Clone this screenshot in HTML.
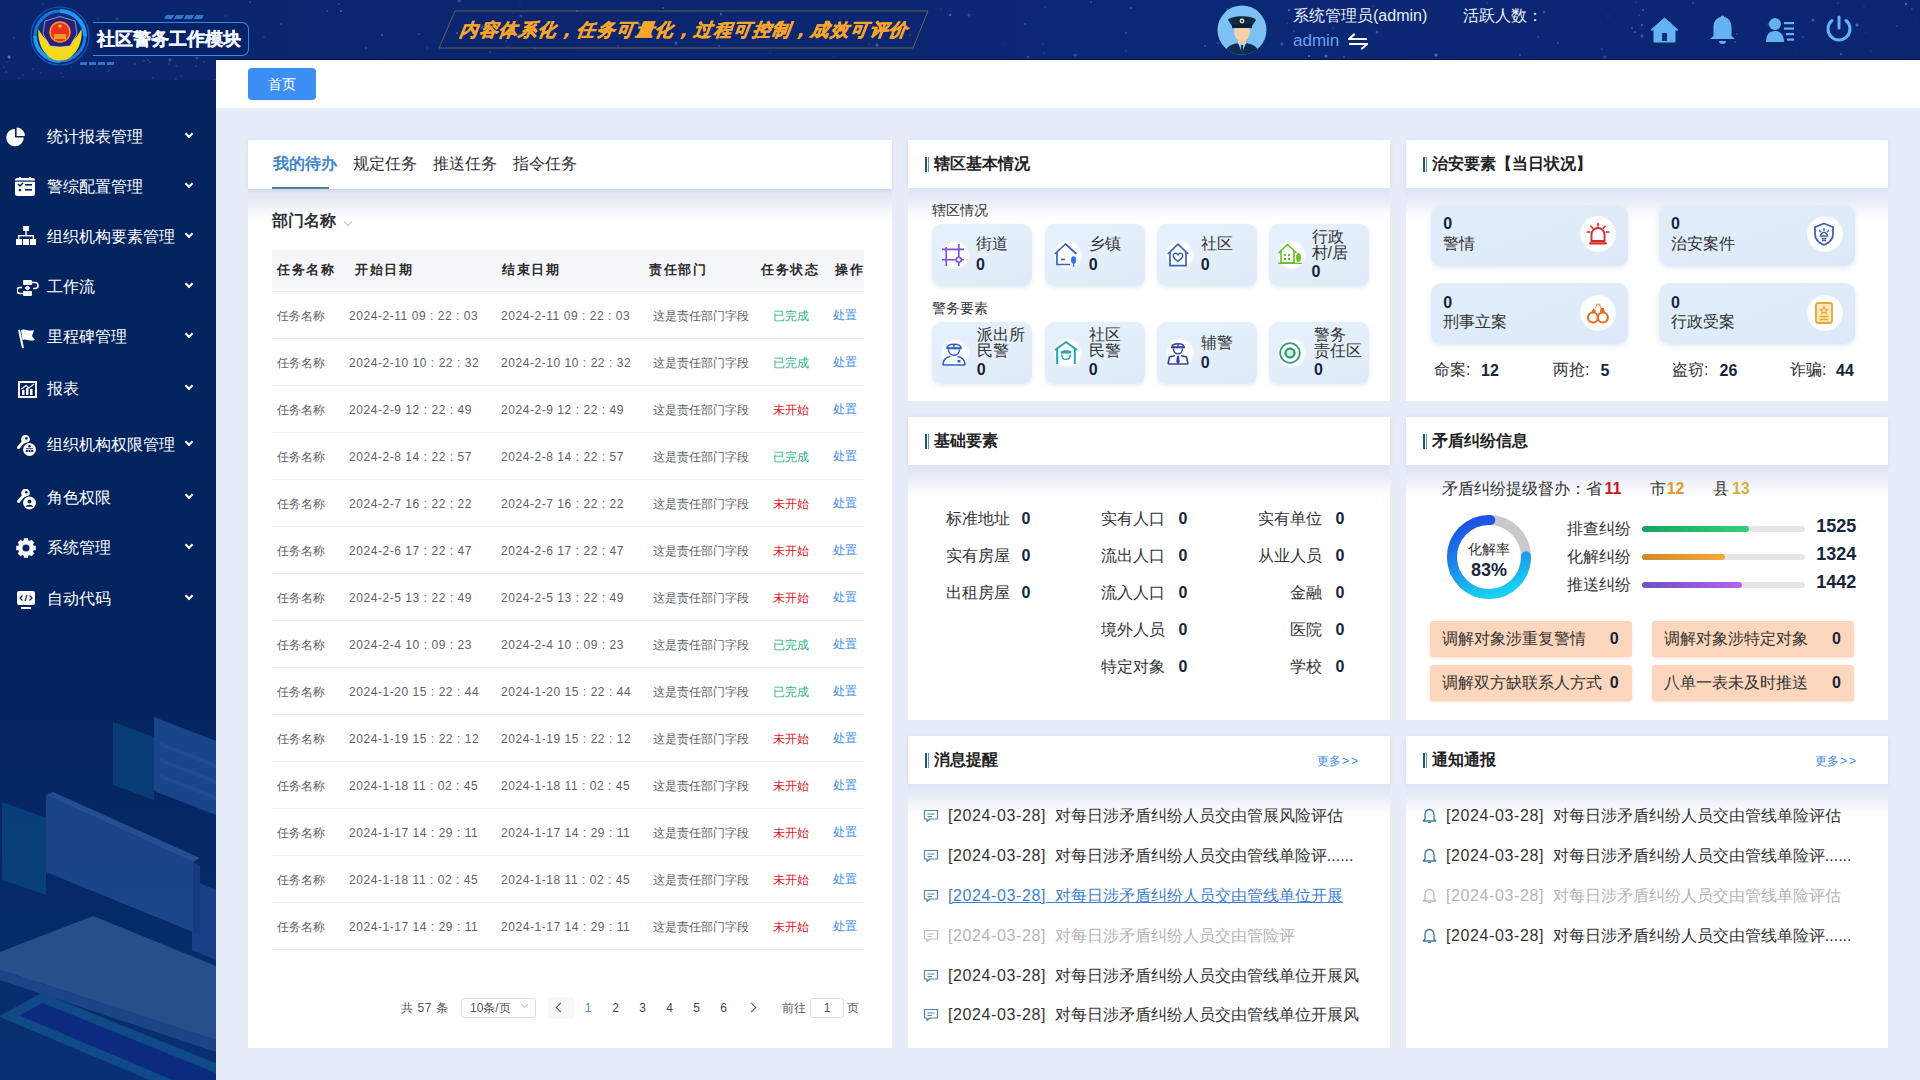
<!DOCTYPE html>
<html><head><meta charset="utf-8">
<style>
*{box-sizing:border-box;margin:0;padding:0}
html,body{width:1920px;height:1080px;overflow:hidden;font-family:"Liberation Sans",sans-serif;background:#e7edf8;position:relative}
.abs{position:absolute}
#hdr{left:0;top:0;width:1920px;height:60px;background:linear-gradient(90deg,#09256d 0%,#0a2670 30%,#0b2874 60%,#0a2671 100%);overflow:hidden}
#side{left:0;top:60px;width:216px;height:1020px;background:linear-gradient(180deg,#03245f 0px,#03245f 640px,#062a68 850px,#0a3074 1020px);overflow:hidden}
#sidetop{left:0;top:0;width:216px;height:20px;background:#09256d}
.mi{position:absolute;left:0;width:216px;height:30px;color:#fff;font-size:16px;line-height:32px}
.mi .t{position:absolute;left:47px;top:0}
.mi .ar{position:absolute;left:186px;top:10px;width:6px;height:6px;border-right:2px solid #fff;border-bottom:2px solid #fff;transform:rotate(45deg)}
.mi svg{position:absolute;left:14px;top:5px}
#crumb{left:216px;top:60px;width:1704px;height:48px;background:#fff}
#crumb .btn{position:absolute;left:32px;top:8px;width:68px;height:32px;background:#3b8ff5;border-radius:4px;color:#fff;font-size:14px;line-height:32px;text-align:center}
.panel{position:absolute;background:#fff}
.ph{position:absolute;left:0;top:0;width:100%;height:48px;background:#fff;box-shadow:0 1px 4px rgba(160,175,210,.3)}
.pb{position:absolute;left:0;top:48px;width:100%;bottom:0;background:linear-gradient(180deg,#dde4f2 0px,#e6ebf6 10px,#f3f5fb 20px,#fcfdfe 28px,#fff 34px)}
.ttl{position:absolute;left:26px;top:0;height:48px;line-height:48px;font-size:16px;font-weight:bold;color:#222}
.mark{position:absolute;left:16px;top:17px;width:6px;height:15px}
.mark:before{content:"";position:absolute;left:0.5px;top:0;width:2px;height:15px;background:#1f5a78}
.mark:after{content:"";position:absolute;left:3.5px;top:0;width:1.6px;height:15px;background:#5a9ac0}
.more{position:absolute;right:30px;top:1px;line-height:48px;font-size:12px;color:#3d8ee6}
.tab{position:absolute;top:13px;font-size:16px;line-height:22px;color:#303133}
.tab.act{color:#3f86cf;font-weight:bold}
.th{position:absolute;font-size:13px;line-height:18px;font-weight:bold;color:#2b2b2b;letter-spacing:1.5px}
.td{position:absolute;font-size:12px;line-height:18px;color:#606266;white-space:nowrap;margin-top:1px}
.dt{letter-spacing:.55px}
.pg{position:absolute;font-size:12px;line-height:18px;color:#555;white-space:nowrap}
/*PC*/
#pc{position:absolute;left:0;top:0;width:1920px;height:1080px}
#pc span{position:absolute;white-space:nowrap}
#pc .msg span{position:static}
.t14{font-size:14px;line-height:20px;color:#333}
.lb{font-size:16px;line-height:16px;color:#333}
.lb.r{text-align:right}
.num{font-size:16px;line-height:16px;font-weight:bold;color:#17263b}
.num18{font-size:18px;line-height:20px;font-weight:bold;color:#17263b}
.card{position:absolute;border-radius:9px;background:linear-gradient(160deg,#e5f1fb 0%,#e3eefa 60%,#dfe9f8 100%);box-shadow:0 2px 4px rgba(195,210,232,.4)}
.card2{position:absolute;width:196.5px;height:61px;border-radius:10px;background:linear-gradient(160deg,#e1eefa 0%,#dde9f8 100%);box-shadow:0 2px 5px rgba(190,205,230,.45)}
.icbg{position:absolute;width:30px;height:30px;border-radius:50%;background:radial-gradient(circle,#fff 55%,rgba(255,255,255,0) 72%)}
.icbg2{position:absolute;width:36px;height:36px;margin:-1px 0 0 -1px;border-radius:50%;background:radial-gradient(circle,#fff 60%,rgba(255,255,255,.6) 78%,rgba(255,255,255,0) 100%)}
.msg{font-size:16px;line-height:22px;color:#333}
.msg .dte{letter-spacing:.6px}
.msg .zh{letter-spacing:0;margin-left:0}
.msg.link{color:#3f7fcf;text-decoration:underline}
.msg.gray{color:#b5b5b5}
/*/PC*/
</style></head><body>
<div id="side" class="abs" style="z-index:0"><div id="sidetop" class="abs"></div>
<svg class="abs" style="left:0;top:560px;opacity:.85" width="216" height="460" viewBox="0 620 216 460">
 <polygon points="113,722 154,737 154,800 113,785" fill="#0b4a84" opacity=".75"/>
 <polygon points="154,717 216,741 216,815 154,791" fill="#1d4b93"/>
 <polygon points="160,742 216,764 216,768 160,746" fill="#2a5aa0" opacity=".6"/>
 <polygon points="160,758 216,780 216,784 160,762" fill="#2a5aa0" opacity=".6"/>
 <polygon points="160,774 216,796 216,800 160,778" fill="#2a5aa0" opacity=".6"/>
 <polygon points="2,802 46,818 46,895 2,880" fill="#0b4a84" opacity=".8"/>
 <polygon points="192,880 216,890 216,960 192,950" fill="#1c4690"/>
 <polygon points="46,795 193,862 193,932 46,872" fill="#1f4b8f"/>
 <polygon points="193,862 200,866 200,936 193,932" fill="#173f85"/>
 <polygon points="46,795 53,792 200,858 193,862" fill="#2b5598"/>
 <polygon points="0,958 93,917 216,968 216,1030 0,945" fill="#2c5591" opacity="0"/>
 <polygon points="0,952 93,916 216,966 216,1040 0,970" fill="#2d5690"/>
 <polygon points="0,970 216,1040 216,1052 0,980" fill="#204a8c"/>
 <polygon points="0,1020 38,1002 216,1072 216,1085 0,1003" fill="none"/>
 <polygon points="9,1016 42,998 320,1110 280,1130" fill="#0b2b82" stroke="#124f8c" stroke-width="9" stroke-linejoin="miter"/>
</svg>
<svg class="abs" style="left:6px;top:67px" width="22" height="22" viewBox="0 0 22 22"><path d="M9 10.5 L9 1.7 A8.8 8.8 0 1 0 17.8 10.5 Z" fill="#fff"/><path d="M10.6 8.9 L10.6 0.6 A8.3 8.3 0 0 1 18.9 8.9 Z" fill="#fff"/></svg>
<div class="mi" style="top:61px"><span class="t">统计报表管理</span><span class="ar"></span></div>
<svg class="abs" style="left:15px;top:117px" width="22" height="22" viewBox="0 0 22 22"><rect x="0" y="1" width="20" height="18" rx="2" fill="#fff"/><rect x="4" y="0" width="2" height="3" fill="#fff"/><rect x="14" y="0" width="2" height="3" fill="#fff"/><path d="M3 7 l2 2 3-3" stroke="#03245f" stroke-width="1.5" fill="none"/><rect x="10" y="7" width="7" height="1.6" fill="#03245f"/><rect x="10" y="12" width="7" height="1.6" fill="#03245f"/><circle cx="5" cy="13" r="1.3" fill="#03245f"/><rect x="0" y="3.5" width="20" height="1.2" fill="#03245f"/></svg>
<div class="mi" style="top:111px"><span class="t">警综配置管理</span><span class="ar"></span></div>
<svg class="abs" style="left:16px;top:166px" width="22" height="22" viewBox="0 0 22 22"><rect x="7" y="0" width="6" height="5" fill="#fff"/><rect x="9.3" y="5" width="1.4" height="5" fill="#fff"/><rect x="2" y="9" width="16" height="1.4" fill="#fff"/><rect x="2" y="9" width="1.4" height="4" fill="#fff"/><rect x="16.6" y="9" width="1.4" height="4" fill="#fff"/><rect x="0" y="13" width="6" height="6" fill="#fff"/><rect x="7" y="13" width="6" height="6" fill="#fff"/><rect x="14" y="13" width="6" height="6" fill="#fff"/></svg>
<div class="mi" style="top:161px"><span class="t">组织机构要素管理</span><span class="ar"></span></div>
<svg class="abs" style="left:17px;top:220px" width="22" height="22" viewBox="0 0 22 22"><rect x="6" y="0" width="9" height="5" rx="1" fill="#fff"/><rect x="6" y="11" width="9" height="5" rx="1" fill="#fff"/><path d="M15 2.5 h3 a3 3 0 0 1 0 6 h-2" stroke="#fff" stroke-width="1.6" fill="none"/><path d="M6 13.5 h-3 a3 3 0 0 1 0 -6 h2" stroke="#fff" stroke-width="1.6" fill="none"/><path d="M10.5 5.5 l3 2.5 -3 2.5 -3 -2.5z" fill="#fff"/></svg>
<div class="mi" style="top:211px"><span class="t">工作流</span><span class="ar"></span></div>
<svg class="abs" style="left:18px;top:268px" width="22" height="22" viewBox="0 0 22 22"><path d="M1 2 L5 20" stroke="#fff" stroke-width="2" /><path d="M3 2 C7 0 10 4 16 2 L14 8 L17 12 C11 14 8 10 4.5 12Z" fill="#fff"/></svg>
<div class="mi" style="top:261px"><span class="t">里程碑管理</span><span class="ar"></span></div>
<svg class="abs" style="left:18px;top:321px" width="22" height="22" viewBox="0 0 22 22"><rect x="1" y="1" width="17" height="15" fill="none" stroke="#fff" stroke-width="2"/><rect x="4" y="9" width="2.5" height="5" fill="#fff"/><rect x="8" y="7" width="2.5" height="7" fill="#fff"/><rect x="12" y="8" width="2.5" height="6" fill="#fff"/><path d="M3.5 8 L8 4.5 L11 7 L16 3" stroke="#fff" stroke-width="1.3" fill="none"/></svg>
<div class="mi" style="top:313px"><span class="t">报表</span><span class="ar"></span></div>
<svg class="abs" style="left:17px;top:375px" width="22" height="22" viewBox="0 0 22 22"><path d="M7 6 L1.5 12.5" stroke="#fff" stroke-width="3" stroke-linecap="round"/><circle cx="8.5" cy="4.2" r="4.3" fill="#fff"/><circle cx="9.3" cy="3.4" r="1.3" fill="#03245f"/><circle cx="12.5" cy="14.5" r="7.6" fill="#03245f"/><circle cx="12.5" cy="14.5" r="6.4" fill="#fff"/><circle cx="12.5" cy="11.3" r="1.3" fill="#03245f"/><rect x="9" y="13.3" width="7" height="0.9" fill="#03245f"/><rect x="8.8" y="15" width="2" height="2" fill="#03245f"/><rect x="11.5" y="15" width="2" height="2" fill="#03245f"/><rect x="14.2" y="15" width="2" height="2" fill="#03245f"/></svg>
<div class="mi" style="top:369px"><span class="t">组织机构权限管理</span><span class="ar"></span></div>
<svg class="abs" style="left:17px;top:429px" width="22" height="22" viewBox="0 0 22 22"><path d="M7 6 L1.5 12.5" stroke="#fff" stroke-width="3" stroke-linecap="round"/><circle cx="8.5" cy="4" r="4.3" fill="#fff"/><circle cx="9.3" cy="3.2" r="1.3" fill="#03245f"/><circle cx="12.5" cy="14" r="7.6" fill="#03245f"/><circle cx="12.5" cy="14" r="6.4" fill="#fff"/><circle cx="12.5" cy="12.5" r="2" fill="#0c2a30"/><path d="M8.8 17.8 C9 15 16 15 16.2 17.8Z" fill="#0c2a30"/></svg>
<div class="mi" style="top:422px"><span class="t">角色权限</span><span class="ar"></span></div>
<svg class="abs" style="left:16px;top:478px" width="22" height="22" viewBox="0 0 22 22"><path d="M17.31 7.94 L19.76 7.82 L19.76 12.18 L17.31 12.06 L16.63 13.71 L18.44 15.36 L15.36 18.44 L13.71 16.63 L12.06 17.31 L12.18 19.76 L7.82 19.76 L7.94 17.31 L6.29 16.63 L4.64 18.44 L1.56 15.36 L3.37 13.71 L2.69 12.06 L0.24 12.18 L0.24 7.82 L2.69 7.94 L3.37 6.29 L1.56 4.64 L4.64 1.56 L6.29 3.37 L7.94 2.69 L7.82 0.24 L12.18 0.24 L12.06 2.69 L13.71 3.37 L15.36 1.56 L18.44 4.64 L16.63 6.29Z" fill="#fff"/><circle cx="10" cy="10" r="8" fill="#fff"/><circle cx="10" cy="10" r="3.5" fill="#03245f"/></svg>
<div class="mi" style="top:472px"><span class="t">系统管理</span><span class="ar"></span></div>
<svg class="abs" style="left:17px;top:531px" width="22" height="22" viewBox="0 0 22 22"><rect x="0" y="0" width="18" height="14" rx="2" fill="#fff"/><rect x="4" y="16" width="10" height="2" fill="#fff"/><path d="M5.5 4.5 L3 7 L5.5 9.5 M12.5 4.5 L15 7 L12.5 9.5 M10 4 L8 10" stroke="#1b2f55" stroke-width="1.3" fill="none"/></svg>
<div class="mi" style="top:523px"><span class="t">自动代码</span><span class="ar"></span></div>
</div>
<div id="hdr" class="abs"></div>
<svg class="abs" style="left:0;top:0" width="1920" height="80" viewBox="0 0 1920 80"><circle cx="457" cy="33" r="1" fill="#8fb8ff" opacity="0.52"/><circle cx="910" cy="35" r="1.5" fill="#8fb8ff" opacity="0.16"/><circle cx="1608" cy="16" r="0.8" fill="#8fb8ff" opacity="0.23"/><circle cx="1377" cy="32" r="1.5" fill="#8fb8ff" opacity="0.34"/><circle cx="1227" cy="9" r="0.8" fill="#8fb8ff" opacity="0.50"/><circle cx="1005" cy="44" r="0.6" fill="#8fb8ff" opacity="0.21"/><circle cx="1838" cy="3" r="0.6" fill="#8fb8ff" opacity="0.48"/><circle cx="517" cy="36" r="1.2" fill="#8fb8ff" opacity="0.44"/><circle cx="1769" cy="24" r="1.5" fill="#8fb8ff" opacity="0.33"/><circle cx="1796" cy="53" r="0.6" fill="#8fb8ff" opacity="0.16"/><circle cx="950" cy="15" r="1.2" fill="#8fb8ff" opacity="0.46"/><circle cx="1642" cy="25" r="1.2" fill="#8fb8ff" opacity="0.38"/><circle cx="1025" cy="24" r="0.8" fill="#8fb8ff" opacity="0.51"/><circle cx="1309" cy="56" r="1" fill="#8fb8ff" opacity="0.55"/><circle cx="1289" cy="10" r="1" fill="#8fb8ff" opacity="0.54"/><circle cx="1737" cy="34" r="0.8" fill="#8fb8ff" opacity="0.40"/><circle cx="1897" cy="16" r="0.6" fill="#8fb8ff" opacity="0.18"/><circle cx="1640" cy="59" r="0.6" fill="#8fb8ff" opacity="0.29"/><circle cx="39" cy="26" r="1.2" fill="#8fb8ff" opacity="0.50"/><circle cx="85" cy="37" r="0.6" fill="#8fb8ff" opacity="0.30"/><circle cx="1126" cy="33" r="1" fill="#8fb8ff" opacity="0.35"/><circle cx="1917" cy="19" r="0.6" fill="#8fb8ff" opacity="0.19"/><circle cx="1028" cy="57" r="1.2" fill="#8fb8ff" opacity="0.27"/><circle cx="506" cy="41" r="1" fill="#8fb8ff" opacity="0.28"/><circle cx="1841" cy="54" r="1.2" fill="#8fb8ff" opacity="0.30"/><circle cx="1670" cy="23" r="1.5" fill="#8fb8ff" opacity="0.42"/><circle cx="197" cy="58" r="1.5" fill="#8fb8ff" opacity="0.26"/><circle cx="1218" cy="43" r="1" fill="#8fb8ff" opacity="0.32"/><circle cx="496" cy="18" r="1" fill="#8fb8ff" opacity="0.15"/><circle cx="797" cy="35" r="0.6" fill="#8fb8ff" opacity="0.30"/><circle cx="1131" cy="8" r="1" fill="#8fb8ff" opacity="0.34"/><circle cx="1304" cy="21" r="1" fill="#8fb8ff" opacity="0.45"/><circle cx="43" cy="4" r="0.6" fill="#8fb8ff" opacity="0.54"/><circle cx="482" cy="27" r="1.5" fill="#8fb8ff" opacity="0.39"/><circle cx="341" cy="11" r="1" fill="#8fb8ff" opacity="0.49"/><circle cx="507" cy="47" r="0.6" fill="#8fb8ff" opacity="0.46"/><circle cx="52" cy="34" r="0.8" fill="#8fb8ff" opacity="0.27"/><circle cx="427" cy="48" r="0.8" fill="#8fb8ff" opacity="0.28"/><circle cx="1302" cy="39" r="0.6" fill="#8fb8ff" opacity="0.19"/><circle cx="618" cy="20" r="0.8" fill="#8fb8ff" opacity="0.33"/><circle cx="1643" cy="10" r="1" fill="#8fb8ff" opacity="0.45"/><circle cx="419" cy="34" r="1" fill="#8fb8ff" opacity="0.24"/><circle cx="366" cy="48" r="1.5" fill="#8fb8ff" opacity="0.22"/><circle cx="535" cy="48" r="0.6" fill="#8fb8ff" opacity="0.47"/><circle cx="663" cy="8" r="1" fill="#8fb8ff" opacity="0.36"/><circle cx="1632" cy="28" r="1.2" fill="#8fb8ff" opacity="0.27"/><circle cx="1091" cy="2" r="1.2" fill="#8fb8ff" opacity="0.21"/><circle cx="9" cy="57" r="1.5" fill="#8fb8ff" opacity="0.54"/><circle cx="834" cy="57" r="0.8" fill="#8fb8ff" opacity="0.16"/><circle cx="877" cy="45" r="1.5" fill="#8fb8ff" opacity="0.54"/><circle cx="1044" cy="53" r="0.6" fill="#8fb8ff" opacity="0.49"/><circle cx="1864" cy="7" r="0.8" fill="#8fb8ff" opacity="0.17"/><circle cx="1735" cy="42" r="0.8" fill="#8fb8ff" opacity="0.51"/><circle cx="1727" cy="35" r="0.6" fill="#8fb8ff" opacity="0.34"/><circle cx="459" cy="1" r="1.5" fill="#8fb8ff" opacity="0.32"/><circle cx="1803" cy="37" r="1" fill="#8fb8ff" opacity="0.20"/><circle cx="1866" cy="32" r="0.6" fill="#8fb8ff" opacity="0.29"/><circle cx="379" cy="32" r="0.6" fill="#8fb8ff" opacity="0.22"/><circle cx="1520" cy="55" r="0.8" fill="#8fb8ff" opacity="0.48"/><circle cx="14" cy="38" r="1.2" fill="#8fb8ff" opacity="0.17"/><circle cx="521" cy="16" r="1.5" fill="#8fb8ff" opacity="0.36"/><circle cx="98" cy="19" r="0.6" fill="#8fb8ff" opacity="0.49"/><circle cx="1488" cy="3" r="0.6" fill="#8fb8ff" opacity="0.18"/><circle cx="1871" cy="51" r="0.6" fill="#8fb8ff" opacity="0.36"/><circle cx="941" cy="9" r="0.6" fill="#8fb8ff" opacity="0.29"/><circle cx="1242" cy="35" r="1" fill="#8fb8ff" opacity="0.26"/><circle cx="1897" cy="26" r="0.8" fill="#8fb8ff" opacity="0.37"/><circle cx="1375" cy="23" r="0.6" fill="#8fb8ff" opacity="0.38"/><circle cx="82" cy="28" r="1.5" fill="#8fb8ff" opacity="0.30"/><circle cx="1538" cy="37" r="1.2" fill="#8fb8ff" opacity="0.17"/><circle cx="1205" cy="46" r="1" fill="#8fb8ff" opacity="0.32"/><circle cx="1333" cy="28" r="0.8" fill="#8fb8ff" opacity="0.24"/><circle cx="519" cy="35" r="1.2" fill="#8fb8ff" opacity="0.24"/><circle cx="250" cy="2" r="1" fill="#8fb8ff" opacity="0.30"/><circle cx="1724" cy="47" r="1" fill="#8fb8ff" opacity="0.20"/><circle cx="1326" cy="56" r="1.5" fill="#8fb8ff" opacity="0.47"/><circle cx="1282" cy="44" r="1.5" fill="#8fb8ff" opacity="0.36"/><circle cx="1558" cy="43" r="1.2" fill="#8fb8ff" opacity="0.21"/><circle cx="1487" cy="3" r="0.6" fill="#8fb8ff" opacity="0.38"/><circle cx="1266" cy="23" r="0.6" fill="#8fb8ff" opacity="0.29"/><circle cx="1636" cy="2" r="0.6" fill="#8fb8ff" opacity="0.42"/><circle cx="1605" cy="57" r="1.5" fill="#8fb8ff" opacity="0.27"/><circle cx="170" cy="60" r="1.5" fill="#8fb8ff" opacity="0.35"/><circle cx="1373" cy="6" r="0.6" fill="#8fb8ff" opacity="0.52"/><circle cx="117" cy="19" r="1.5" fill="#8fb8ff" opacity="0.22"/><circle cx="148" cy="60" r="0.8" fill="#8fb8ff" opacity="0.33"/><circle cx="1344" cy="57" r="1" fill="#8fb8ff" opacity="0.30"/><circle cx="762" cy="21" r="1.2" fill="#8fb8ff" opacity="0.54"/><circle cx="721" cy="14" r="1.2" fill="#8fb8ff" opacity="0.49"/><circle cx="1857" cy="25" r="1.5" fill="#8fb8ff" opacity="0.45"/><circle cx="1294" cy="31" r="1.2" fill="#8fb8ff" opacity="0.21"/><circle cx="770" cy="53" r="0.8" fill="#8fb8ff" opacity="0.19"/><circle cx="1436" cy="55" r="1.5" fill="#8fb8ff" opacity="0.53"/><circle cx="1126" cy="51" r="0.8" fill="#8fb8ff" opacity="0.26"/><circle cx="382" cy="35" r="1" fill="#8fb8ff" opacity="0.52"/><circle cx="1635" cy="32" r="1" fill="#8fb8ff" opacity="0.42"/><circle cx="1642" cy="36" r="1.5" fill="#8fb8ff" opacity="0.38"/><circle cx="513" cy="13" r="0.6" fill="#8fb8ff" opacity="0.26"/><circle cx="1544" cy="12" r="1.5" fill="#8fb8ff" opacity="0.29"/><circle cx="618" cy="46" r="0.8" fill="#8fb8ff" opacity="0.32"/><circle cx="1339" cy="42" r="0.8" fill="#8fb8ff" opacity="0.34"/><circle cx="1602" cy="49" r="1.5" fill="#8fb8ff" opacity="0.16"/><circle cx="1906" cy="4" r="1.2" fill="#8fb8ff" opacity="0.46"/><circle cx="1693" cy="3" r="0.8" fill="#8fb8ff" opacity="0.51"/><circle cx="1245" cy="47" r="0.6" fill="#8fb8ff" opacity="0.53"/><circle cx="1639" cy="15" r="0.8" fill="#8fb8ff" opacity="0.46"/><circle cx="264" cy="37" r="0.6" fill="#8fb8ff" opacity="0.51"/><circle cx="490" cy="52" r="1" fill="#8fb8ff" opacity="0.22"/><circle cx="226" cy="16" r="1" fill="#8fb8ff" opacity="0.16"/><circle cx="869" cy="44" r="1" fill="#8fb8ff" opacity="0.15"/><circle cx="643" cy="26" r="1.2" fill="#8fb8ff" opacity="0.18"/><circle cx="1237" cy="45" r="1.2" fill="#8fb8ff" opacity="0.31"/><circle cx="1045" cy="7" r="1" fill="#8fb8ff" opacity="0.18"/><circle cx="831" cy="26" r="1.5" fill="#8fb8ff" opacity="0.51"/><circle cx="719" cy="46" r="1.2" fill="#8fb8ff" opacity="0.27"/><circle cx="1298" cy="39" r="1" fill="#8fb8ff" opacity="0.19"/><circle cx="1813" cy="20" r="1.5" fill="#8fb8ff" opacity="0.36"/><circle cx="676" cy="43" r="1.5" fill="#8fb8ff" opacity="0.45"/><circle cx="1240" cy="44" r="0.8" fill="#8fb8ff" opacity="0.22"/><circle cx="1709" cy="39" r="0.6" fill="#8fb8ff" opacity="0.19"/><circle cx="1075" cy="55" r="1.5" fill="#8fb8ff" opacity="0.32"/><circle cx="577" cy="11" r="1.2" fill="#8fb8ff" opacity="0.27"/><circle cx="339" cy="4" r="0.8" fill="#8fb8ff" opacity="0.45"/><circle cx="1043" cy="44" r="1" fill="#8fb8ff" opacity="0.19"/><circle cx="520" cy="3" r="0.8" fill="#8fb8ff" opacity="0.17"/><circle cx="969" cy="15" r="1.5" fill="#8fb8ff" opacity="0.29"/><circle cx="639" cy="24" r="1.5" fill="#8fb8ff" opacity="0.47"/><circle cx="1912" cy="9" r="1.5" fill="#8fb8ff" opacity="0.19"/><circle cx="1396" cy="11" r="0.8" fill="#8fb8ff" opacity="0.38"/><circle cx="1287" cy="23" r="0.8" fill="#8fb8ff" opacity="0.39"/><circle cx="281" cy="24" r="0.8" fill="#8fb8ff" opacity="0.37"/><circle cx="327" cy="11" r="1" fill="#8fb8ff" opacity="0.30"/><circle cx="63" cy="77" r="0.8" fill="#8fb8ff" opacity="0.3"/><circle cx="96" cy="68" r="0.8" fill="#8fb8ff" opacity="0.3"/><circle cx="176" cy="66" r="0.8" fill="#8fb8ff" opacity="0.3"/><circle cx="196" cy="66" r="0.8" fill="#8fb8ff" opacity="0.3"/><circle cx="108" cy="71" r="0.8" fill="#8fb8ff" opacity="0.3"/><circle cx="153" cy="78" r="0.8" fill="#8fb8ff" opacity="0.3"/><circle cx="144" cy="61" r="0.8" fill="#8fb8ff" opacity="0.3"/><circle cx="41" cy="73" r="0.8" fill="#8fb8ff" opacity="0.3"/><circle cx="23" cy="75" r="0.8" fill="#8fb8ff" opacity="0.3"/><circle cx="50" cy="63" r="0.8" fill="#8fb8ff" opacity="0.3"/><circle cx="135" cy="64" r="0.8" fill="#8fb8ff" opacity="0.3"/><circle cx="169" cy="64" r="0.8" fill="#8fb8ff" opacity="0.3"/><circle cx="176" cy="79" r="0.8" fill="#8fb8ff" opacity="0.3"/><circle cx="204" cy="62" r="0.8" fill="#8fb8ff" opacity="0.3"/><circle cx="61" cy="73" r="0.8" fill="#8fb8ff" opacity="0.3"/><circle cx="33" cy="69" r="0.8" fill="#8fb8ff" opacity="0.3"/><circle cx="19" cy="78" r="0.8" fill="#8fb8ff" opacity="0.3"/><circle cx="6" cy="72" r="0.8" fill="#8fb8ff" opacity="0.3"/><circle cx="109" cy="70" r="0.8" fill="#8fb8ff" opacity="0.3"/><circle cx="4" cy="67" r="0.8" fill="#8fb8ff" opacity="0.3"/><circle cx="71" cy="67" r="0.8" fill="#8fb8ff" opacity="0.3"/><circle cx="150" cy="62" r="0.8" fill="#8fb8ff" opacity="0.3"/><circle cx="181" cy="76" r="0.8" fill="#8fb8ff" opacity="0.3"/><circle cx="7" cy="62" r="0.8" fill="#8fb8ff" opacity="0.3"/><circle cx="215" cy="80" r="0.8" fill="#8fb8ff" opacity="0.3"/></svg>
<!-- logo -->
<svg class="abs" style="left:28px;top:4px" width="64" height="64" viewBox="0 0 64 64">
 <circle cx="32" cy="32" r="29" fill="none" stroke="#1b6fd8" stroke-width="1.2" opacity=".7"/>
 <circle cx="32" cy="32" r="26" fill="#0d2f7a"/>
 <path d="M32 7 A25 25 0 0 1 57 32" stroke="#1e9af5" stroke-width="4" fill="none"/>
 <path d="M57 32 A25 25 0 0 1 32 57" stroke="#1a8ae8" stroke-width="3" fill="none" opacity=".9"/>
 <path d="M32 57 A25 25 0 0 1 7 32" stroke="#1e9af5" stroke-width="4" fill="none"/>
 <path d="M7 32 A25 25 0 0 1 32 7" stroke="#1577d6" stroke-width="3" fill="none"/>
 <path d="M10.5 25 C9 44 20 56 32 56 C44 56 55 44 53.5 25 C48 36 42 40 32 40 C22 40 16 36 10.5 25Z" fill="#f4d81c"/>
 <path d="M17 17 L32 12.5 L47 17 L49 30 L42 42 L32 43 L22 42 L15 30Z" fill="#2a1f7a" stroke="#cfd8ff" stroke-width=".6"/>
 <circle cx="32" cy="28" r="10" fill="#e8341c"/>
 <circle cx="32" cy="28" r="10" fill="none" stroke="#f59a2a" stroke-width="1.5"/>
 <rect x="26" y="30" width="12" height="5" fill="#f59a2a"/>
 <circle cx="32" cy="22" r="1.6" fill="#ffd84a"/>
 <path d="M18 46 C24 54 40 54 46 46 L44 52 C38 58 26 58 20 52Z" fill="#f4d81c"/>
</svg>
<div class="abs" style="left:93px;top:22px;width:156px;height:34px;border:1.5px solid #3a88e6;border-left:none;border-radius:0 7px 7px 0;background:rgba(6,28,88,.35)"></div>
<div class="abs" style="left:165px;top:15px;width:38px;height:4px;background:repeating-linear-gradient(90deg,#3d8fe8 0 8px,transparent 8px 10px);transform:skewX(-20deg);opacity:.75"></div>
<div class="abs" style="left:80px;top:62px;width:36px;height:3px;background:repeating-linear-gradient(90deg,#3d8fe8 0 7px,transparent 7px 9px);transform:skewX(-20deg);opacity:.75"></div>
<div class="abs" style="left:97px;top:26px;font-size:18px;line-height:26px;font-weight:bold;color:#f4f8ff;letter-spacing:0px;-webkit-text-stroke:.3px #f4f8ff">社区警务工作模块</div>
<!-- slogan -->
<svg class="abs" style="left:430px;top:8px" width="500" height="44" viewBox="0 0 500 44">
 <polygon points="25,3 498,3 483,40 9,40" fill="rgba(20,40,110,.35)" stroke="#b58a3a" stroke-width="1" opacity=".55"/>
</svg>
<div class="abs" style="left:460px;top:17px;font-size:18px;line-height:26px;font-weight:bold;font-style:italic;color:#f5a52c;transform:skewX(-8deg);letter-spacing:1.5px;-webkit-text-stroke:.5px #f5a52c">内容体系化，任务可量化，过程可控制，成效可评价</div>
<!-- avatar -->
<svg class="abs" style="left:1217px;top:5px" width="50" height="50" viewBox="0 0 50 50">
 <defs><clipPath id="avc"><circle cx="25" cy="25" r="24.5"/></clipPath></defs>
 <circle cx="25" cy="25" r="24.5" fill="#7cc0f4"/>
 <g clip-path="url(#avc)">
  <path d="M8 50 C8 42 14 38 25 38 C36 38 42 42 42 50Z" fill="#0f2a55"/>
  <path d="M21 38 L25 48 L29 38Z" fill="#9fd4f5"/>
  <path d="M24 40 L26 40 L26.5 48 L23.5 48Z" fill="#0e3a5a"/>
  <rect x="21" y="32" width="8" height="7" fill="#f3c9a0"/>
  <ellipse cx="25" cy="27" rx="8" ry="9" fill="#f6d0a8"/>
  <path d="M11 15 C14 10 36 10 39 15 L35 21 L15 21Z" fill="#0f2a45"/>
  <rect x="15" y="19" width="20" height="4" fill="#0b1f38"/>
  <circle cx="25" cy="16" r="2.4" fill="#e8e0b0"/><circle cx="25" cy="16" r="1.1" fill="#0f2a45"/>
 </g>
</svg>
<div class="abs" style="left:1293px;top:4px;font-size:16px;line-height:24px;color:#e9eef8">系统管理员(admin)</div>
<div class="abs" style="left:1463px;top:4px;font-size:16px;line-height:24px;color:#e9eef8">活跃人数：</div>
<div class="abs" style="left:1293px;top:29px;font-size:17px;line-height:24px;color:#6c9ff0">admin</div>
<svg class="abs" style="left:1348px;top:33px" width="20" height="17" viewBox="0 0 20 17">
 <path d="M1 6 H18 M1 6 L6 1.5" stroke="#fff" stroke-width="2.2" fill="none" stroke-linecap="round"/>
 <path d="M2 11 H19 M19 11 L14 15.5" stroke="#fff" stroke-width="2.2" fill="none" stroke-linecap="round"/>
</svg>
<!-- right icons -->
<svg class="abs" style="left:1650px;top:17px" width="29" height="26" viewBox="0 0 29 26">
 <path d="M14.5 1 L28 13 L25 13 L25 25 L4 25 L4 13 L1 13Z" fill="#64b1f4" stroke="#64b1f4" stroke-width="1" stroke-linejoin="round"/>
 <rect x="12" y="16" width="5" height="8" fill="#0c2d80"/>
</svg>
<svg class="abs" style="left:1709px;top:15px" width="27" height="30" viewBox="0 0 27 30">
 <circle cx="13.5" cy="2.5" r="2" fill="#64b1f4"/>
 <path d="M13.5 2 C6 2 4.5 8 4.5 13 L4.5 21 L1 24 L26 24 L22.5 21 L22.5 13 C22.5 8 21 2 13.5 2Z" fill="#64b1f4"/>
 <path d="M10 26 a3.5 3 0 0 0 7 0Z" fill="#64b1f4"/>
</svg>
<svg class="abs" style="left:1765px;top:17px" width="30" height="27" viewBox="0 0 30 27">
 <circle cx="10" cy="7" r="6" fill="#64b1f4"/>
 <path d="M1 25 C1 17 5 14 10 14 C15 14 19 17 19 25Z" fill="#64b1f4"/>
 <rect x="19" y="5" width="10" height="2.2" fill="#64b1f4"/>
 <rect x="19" y="10.5" width="10" height="2.2" fill="#64b1f4"/>
 <rect x="21" y="16" width="8" height="2.2" fill="#64b1f4"/>
 <rect x="22" y="21.5" width="7" height="2.2" fill="#64b1f4"/>
</svg>
<svg class="abs" style="left:1824px;top:15px" width="30" height="28" viewBox="0 0 30 28">
 <path d="M8 5.5 A11 11 0 1 0 22 5.5" stroke="#64b1f4" stroke-width="3" fill="none" stroke-linecap="round"/>
 <path d="M15 2 V13" stroke="#64b1f4" stroke-width="3" stroke-linecap="round"/>
</svg>

<div class="abs" style="left:216px;top:58.5px;width:1704px;height:1.5px;background:rgba(4,14,55,.7)"></div>
<div id="crumb" class="abs"><div class="btn">首页</div></div>

<!-- panels -->
<div class="panel" style="left:248px;top:140px;width:644px;height:908px">
  <div class="pb" style="top:49px"></div>
  <div class="ph" style="height:49px">
    <span class="tab act" style="left:25px">我的待办</span>
    <span class="tab" style="left:105px">规定任务</span>
    <span class="tab" style="left:185px">推送任务</span>
    <span class="tab" style="left:265px">指令任务</span>
    <span class="abs" style="left:24px;top:47px;width:57px;height:2px;background:#4f809c"></span>
  </div>
  <span class="abs" style="left:24px;top:70px;font-size:16px;line-height:22px;font-weight:bold;color:#303133">部门名称</span>
  <span class="abs" style="left:97px;top:79px;width:6px;height:6px;border-right:1px solid #c0c4cc;border-bottom:1px solid #c0c4cc;transform:rotate(45deg)"></span>
  <div class="abs" style="left:24px;top:110px;width:592px;height:39px;background:#f5f6f7"></div>
<span class="th" style="left:29px;top:121px">任务名称</span>
<span class="th" style="left:107px;top:121px">开始日期</span>
<span class="th" style="left:254px;top:121px">结束日期</span>
<span class="th" style="left:401px;top:121px">责任部门</span>
<span class="th" style="left:513px;top:121px">任务状态</span>
<span class="th" style="left:587px;top:121px">操作</span>
<div class="abs" style="left:24px;top:151px;width:592px;height:1px;background:#ebeef5"></div>
<span class="td" style="left:29px;top:166px">任务名称</span><span class="td dt" style="left:101px;top:166px">2024-2-11 09 : 22 : 03</span><span class="td dt" style="left:253px;top:166px">2024-2-11 09 : 22 : 03</span><span class="td" style="left:405px;top:166px">这是责任部门字段</span><span class="td" style="left:525px;top:166px;color:#2bb38a">已完成</span><span class="td" style="left:585px;top:165px;color:#3d8ee8">处置</span>
<div class="abs" style="left:24px;top:198px;width:592px;height:1px;background:#ebeef5"></div>
<span class="td" style="left:29px;top:213px">任务名称</span><span class="td dt" style="left:101px;top:213px">2024-2-10 10 : 22 : 32</span><span class="td dt" style="left:253px;top:213px">2024-2-10 10 : 22 : 32</span><span class="td" style="left:405px;top:213px">这是责任部门字段</span><span class="td" style="left:525px;top:213px;color:#2bb38a">已完成</span><span class="td" style="left:585px;top:212px;color:#3d8ee8">处置</span>
<div class="abs" style="left:24px;top:245px;width:592px;height:1px;background:#ebeef5"></div>
<span class="td" style="left:29px;top:260px">任务名称</span><span class="td dt" style="left:101px;top:260px">2024-2-9 12 : 22 : 49</span><span class="td dt" style="left:253px;top:260px">2024-2-9 12 : 22 : 49</span><span class="td" style="left:405px;top:260px">这是责任部门字段</span><span class="td" style="left:525px;top:260px;color:#e4161f">未开始</span><span class="td" style="left:585px;top:259px;color:#3d8ee8">处置</span>
<div class="abs" style="left:24px;top:292px;width:592px;height:1px;background:#ebeef5"></div>
<span class="td" style="left:29px;top:307px">任务名称</span><span class="td dt" style="left:101px;top:307px">2024-2-8 14 : 22 : 57</span><span class="td dt" style="left:253px;top:307px">2024-2-8 14 : 22 : 57</span><span class="td" style="left:405px;top:307px">这是责任部门字段</span><span class="td" style="left:525px;top:307px;color:#2bb38a">已完成</span><span class="td" style="left:585px;top:306px;color:#3d8ee8">处置</span>
<div class="abs" style="left:24px;top:339px;width:592px;height:1px;background:#ebeef5"></div>
<span class="td" style="left:29px;top:354px">任务名称</span><span class="td dt" style="left:101px;top:354px">2024-2-7 16 : 22 : 22</span><span class="td dt" style="left:253px;top:354px">2024-2-7 16 : 22 : 22</span><span class="td" style="left:405px;top:354px">这是责任部门字段</span><span class="td" style="left:525px;top:354px;color:#e4161f">未开始</span><span class="td" style="left:585px;top:353px;color:#3d8ee8">处置</span>
<div class="abs" style="left:24px;top:386px;width:592px;height:1px;background:#ebeef5"></div>
<span class="td" style="left:29px;top:401px">任务名称</span><span class="td dt" style="left:101px;top:401px">2024-2-6 17 : 22 : 47</span><span class="td dt" style="left:253px;top:401px">2024-2-6 17 : 22 : 47</span><span class="td" style="left:405px;top:401px">这是责任部门字段</span><span class="td" style="left:525px;top:401px;color:#e4161f">未开始</span><span class="td" style="left:585px;top:400px;color:#3d8ee8">处置</span>
<div class="abs" style="left:24px;top:433px;width:592px;height:1px;background:#ebeef5"></div>
<span class="td" style="left:29px;top:448px">任务名称</span><span class="td dt" style="left:101px;top:448px">2024-2-5 13 : 22 : 49</span><span class="td dt" style="left:253px;top:448px">2024-2-5 13 : 22 : 49</span><span class="td" style="left:405px;top:448px">这是责任部门字段</span><span class="td" style="left:525px;top:448px;color:#e4161f">未开始</span><span class="td" style="left:585px;top:447px;color:#3d8ee8">处置</span>
<div class="abs" style="left:24px;top:480px;width:592px;height:1px;background:#ebeef5"></div>
<span class="td" style="left:29px;top:495px">任务名称</span><span class="td dt" style="left:101px;top:495px">2024-2-4 10 : 09 : 23</span><span class="td dt" style="left:253px;top:495px">2024-2-4 10 : 09 : 23</span><span class="td" style="left:405px;top:495px">这是责任部门字段</span><span class="td" style="left:525px;top:495px;color:#2bb38a">已完成</span><span class="td" style="left:585px;top:494px;color:#3d8ee8">处置</span>
<div class="abs" style="left:24px;top:527px;width:592px;height:1px;background:#ebeef5"></div>
<span class="td" style="left:29px;top:542px">任务名称</span><span class="td dt" style="left:101px;top:542px">2024-1-20 15 : 22 : 44</span><span class="td dt" style="left:253px;top:542px">2024-1-20 15 : 22 : 44</span><span class="td" style="left:405px;top:542px">这是责任部门字段</span><span class="td" style="left:525px;top:542px;color:#2bb38a">已完成</span><span class="td" style="left:585px;top:541px;color:#3d8ee8">处置</span>
<div class="abs" style="left:24px;top:574px;width:592px;height:1px;background:#ebeef5"></div>
<span class="td" style="left:29px;top:589px">任务名称</span><span class="td dt" style="left:101px;top:589px">2024-1-19 15 : 22 : 12</span><span class="td dt" style="left:253px;top:589px">2024-1-19 15 : 22 : 12</span><span class="td" style="left:405px;top:589px">这是责任部门字段</span><span class="td" style="left:525px;top:589px;color:#e4161f">未开始</span><span class="td" style="left:585px;top:588px;color:#3d8ee8">处置</span>
<div class="abs" style="left:24px;top:621px;width:592px;height:1px;background:#ebeef5"></div>
<span class="td" style="left:29px;top:636px">任务名称</span><span class="td dt" style="left:101px;top:636px">2024-1-18 11 : 02 : 45</span><span class="td dt" style="left:253px;top:636px">2024-1-18 11 : 02 : 45</span><span class="td" style="left:405px;top:636px">这是责任部门字段</span><span class="td" style="left:525px;top:636px;color:#e4161f">未开始</span><span class="td" style="left:585px;top:635px;color:#3d8ee8">处置</span>
<div class="abs" style="left:24px;top:668px;width:592px;height:1px;background:#ebeef5"></div>
<span class="td" style="left:29px;top:683px">任务名称</span><span class="td dt" style="left:101px;top:683px">2024-1-17 14 : 29 : 11</span><span class="td dt" style="left:253px;top:683px">2024-1-17 14 : 29 : 11</span><span class="td" style="left:405px;top:683px">这是责任部门字段</span><span class="td" style="left:525px;top:683px;color:#e4161f">未开始</span><span class="td" style="left:585px;top:682px;color:#3d8ee8">处置</span>
<div class="abs" style="left:24px;top:715px;width:592px;height:1px;background:#ebeef5"></div>
<span class="td" style="left:29px;top:730px">任务名称</span><span class="td dt" style="left:101px;top:730px">2024-1-18 11 : 02 : 45</span><span class="td dt" style="left:253px;top:730px">2024-1-18 11 : 02 : 45</span><span class="td" style="left:405px;top:730px">这是责任部门字段</span><span class="td" style="left:525px;top:730px;color:#e4161f">未开始</span><span class="td" style="left:585px;top:729px;color:#3d8ee8">处置</span>
<div class="abs" style="left:24px;top:762px;width:592px;height:1px;background:#ebeef5"></div>
<span class="td" style="left:29px;top:777px">任务名称</span><span class="td dt" style="left:101px;top:777px">2024-1-17 14 : 29 : 11</span><span class="td dt" style="left:253px;top:777px">2024-1-17 14 : 29 : 11</span><span class="td" style="left:405px;top:777px">这是责任部门字段</span><span class="td" style="left:525px;top:777px;color:#e4161f">未开始</span><span class="td" style="left:585px;top:776px;color:#3d8ee8">处置</span>
<div class="abs" style="left:24px;top:809px;width:592px;height:1px;background:#ebeef5"></div>
<span class="pg" style="left:153px;top:859px" ><span style="letter-spacing:.6px">共 57 条</span></span>
<div class="abs" style="left:213px;top:858px;width:75px;height:20px;border:1px solid #dcdfe6;border-radius:3px"></div>
<span class="pg" style="left:222px;top:859px">10条/页</span>
<span class="abs" style="left:274px;top:862px;width:5px;height:5px;border-right:1px solid #c0c4cc;border-bottom:1px solid #c0c4cc;transform:rotate(45deg)"></span>
<div class="abs" style="left:300px;top:857px;width:26px;height:22px;background:#f7f8fa"></div>
<span class="abs" style="left:309px;top:864px;width:7px;height:7px;border-left:1.5px solid #555;border-bottom:1.5px solid #555;transform:rotate(45deg)"></span>
<span class="abs" style="left:500px;top:864px;width:7px;height:7px;border-right:1.5px solid #555;border-top:1.5px solid #555;transform:rotate(45deg)"></span>
<span class="pg" style="left:330px;width:20px;text-align:center;top:859px;color:#3d8ee8">1</span><span class="pg" style="left:357.70000000000005px;width:20px;text-align:center;top:859px;color:#444">2</span><span class="pg" style="left:384.70000000000005px;width:20px;text-align:center;top:859px;color:#444">3</span><span class="pg" style="left:411.6px;width:20px;text-align:center;top:859px;color:#444">4</span><span class="pg" style="left:438.70000000000005px;width:20px;text-align:center;top:859px;color:#444">5</span><span class="pg" style="left:465.6px;width:20px;text-align:center;top:859px;color:#444">6</span><span class="pg" style="left:534px;top:859px">前往</span>
<div class="abs" style="left:562px;top:858px;width:34px;height:20px;border:1px solid #dcdfe6;border-radius:3px"></div>
<span class="pg" style="left:562px;width:34px;text-align:center;top:859px">1</span>
<span class="pg" style="left:599px;top:859px">页</span>
</div>
<div class="panel" style="left:908px;top:140px;width:482px;height:261px">
  <div class="ph"><span class="mark"></span><span class="ttl">辖区基本情况</span></div><div class="pb"></div>
</div>
<div class="panel" style="left:1406px;top:140px;width:482px;height:261px">
  <div class="ph"><span class="mark"></span><span class="ttl">治安要素【当日状况】</span></div><div class="pb"></div>
</div>
<div class="panel" style="left:908px;top:417px;width:482px;height:303px">
  <div class="ph"><span class="mark"></span><span class="ttl">基础要素</span></div><div class="pb"></div>
</div>
<div class="panel" style="left:1406px;top:417px;width:482px;height:303px">
  <div class="ph"><span class="mark"></span><span class="ttl">矛盾纠纷信息</span></div><div class="pb"></div>
</div>
<div class="panel" style="left:908px;top:736px;width:482px;height:312px">
  <div class="ph"><span class="mark"></span><span class="ttl">消息提醒</span><span class="more">更多<span style="letter-spacing:2px;margin-left:1px">&gt;&gt;</span></span></div><div class="pb"></div>
</div>
<div class="panel" style="left:1406px;top:736px;width:482px;height:312px">
  <div class="ph"><span class="mark"></span><span class="ttl">通知通报</span><span class="more">更多<span style="letter-spacing:2px;margin-left:1px">&gt;&gt;</span></span></div><div class="pb"></div>
</div>
<!--PANELS-->
<div id="pc"><span class="t14" style="left:932px;top:200px">辖区情况</span><span class="t14" style="left:932px;top:298px">警务要素</span><div class="card" style="left:932px;top:224px;width:100px;height:62px"></div>
<div class="card" style="left:932px;top:322px;width:100px;height:62px"></div>
<div class="icbg" style="left:940px;top:240px"></div><div class="icbg" style="left:940px;top:338px"></div><div class="card" style="left:1044.5px;top:224px;width:100px;height:62px"></div>
<div class="card" style="left:1044.5px;top:322px;width:100px;height:62px"></div>
<div class="icbg" style="left:1052.5px;top:240px"></div><div class="icbg" style="left:1052.5px;top:338px"></div><div class="card" style="left:1156.5px;top:224px;width:100px;height:62px"></div>
<div class="card" style="left:1156.5px;top:322px;width:100px;height:62px"></div>
<div class="icbg" style="left:1164.5px;top:240px"></div><div class="icbg" style="left:1164.5px;top:338px"></div><div class="card" style="left:1268.5px;top:224px;width:100px;height:62px"></div>
<div class="card" style="left:1268.5px;top:322px;width:100px;height:62px"></div>
<div class="icbg" style="left:1276.5px;top:240px"></div><div class="icbg" style="left:1276.5px;top:338px"></div><svg class="abs" style="left:942px;top:244px" width="26" height="26" viewBox="0 0 26 26"><path d="M4.2 3 V22 M16.8 0 V13.2 M16.8 18.2 V22 M0 5.4 H22 M0 15.7 H14.3 M19.3 15.7 H22" stroke="#7a4ed6" stroke-width="1.6" fill="none"/><circle cx="16.8" cy="15.7" r="2.5" stroke="#7a4ed6" stroke-width="1.5" fill="none"/></svg><svg class="abs" style="left:1054px;top:243px" width="26" height="26" viewBox="0 0 26 26"><path d="M0.8 11 L11.5 1 L22.5 11" stroke="#3a64b0" stroke-width="1.7" fill="none" stroke-linejoin="round"/><path d="M3 9 V21.5 H16" stroke="#3a64b0" stroke-width="1.7" fill="none"/><path d="M7 16.5 H11" stroke="#3a64b0" stroke-width="1.6"/><ellipse cx="19.6" cy="17" rx="2.6" ry="3.8" fill="#2a78e0"/><path d="M19.6 19 V24" stroke="#2a78e0" stroke-width="1.3"/></svg><svg class="abs" style="left:1167px;top:243px" width="26" height="26" viewBox="0 0 26 26"><path d="M0.8 11 L11 1.2 L21.2 11" stroke="#3a64b0" stroke-width="1.7" fill="none" stroke-linejoin="round"/><path d="M3 9 V22.6 H19 V9" stroke="#3a64b0" stroke-width="1.7" fill="none"/><path d="M11 18.5 C7 15.5 5.8 13.8 6.3 12 C6.8 10 9.8 9.6 11 11.8 C12.2 9.6 15.2 10 15.7 12 C16.2 13.8 15 15.5 11 18.5Z" stroke="#3a64b0" stroke-width="1.5" fill="none"/></svg><svg class="abs" style="left:1278px;top:243px" width="26" height="26" viewBox="0 0 26 26"><path d="M0.5 10 L9.5 1.5 L18.5 10" stroke="#6cbf2a" stroke-width="1.7" fill="none" stroke-linejoin="round"/><path d="M3 8 V20 H16 V8" stroke="#6cbf2a" stroke-width="1.6" fill="none"/><rect x="6" y="11" width="2" height="2" fill="#6cbf2a"/><rect x="10" y="11" width="2" height="2" fill="#6cbf2a"/><rect x="6" y="15" width="2" height="2" fill="#6cbf2a"/><rect x="10" y="15" width="2" height="2" fill="#6cbf2a"/><ellipse cx="20.5" cy="14.5" rx="2.4" ry="4.5" fill="#6cbf2a"/><path d="M0 20.3 H24" stroke="#6cbf2a" stroke-width="1.4"/></svg><svg class="abs" style="left:942px;top:341px" width="26" height="26" viewBox="0 0 26 26"><path d="M5 7 C5 2 19 2 19 7 Z" stroke="#2f5fc8" stroke-width="1.5" fill="none"/><path d="M4.5 7.5 H19.5" stroke="#2f5fc8" stroke-width="1.6"/><path d="M6.5 8.5 C6.5 16 17.5 16 17.5 8.5" stroke="#2f5fc8" stroke-width="1.5" fill="none"/><path d="M1 24 C1 18 5 16 8.5 15.5 M23 24 C23 18 19 16 15.5 15.5 M1 24 H23" stroke="#2f5fc8" stroke-width="1.6" fill="none"/><rect x="15.5" y="19" width="3" height="2.5" fill="#2f5fc8"/><circle cx="12" cy="4.8" r="1" fill="#2f5fc8"/></svg><svg class="abs" style="left:1054px;top:341px" width="26" height="26" viewBox="0 0 26 26"><path d="M1 9 L12 1 L23 9" stroke="#22a6b3" stroke-width="2" fill="none" stroke-linejoin="round"/><path d="M3.2 8 V23 M20.8 8 V23" stroke="#22a6b3" stroke-width="2" fill="none"/><path d="M6.5 11 C6.5 8.5 17.5 8.5 17.5 11 L17 12.5 H7Z" fill="#22a6b3"/><path d="M7.8 13.5 C7.8 20 16.2 20 16.2 13.5" stroke="#22a6b3" stroke-width="1.4" fill="none"/></svg><svg class="abs" style="left:1167px;top:341px" width="26" height="26" viewBox="0 0 26 26"><path d="M5 6 C5 1.5 17 1.5 17 6 Z" stroke="#3442a8" stroke-width="1.5" fill="none"/><path d="M4 6.5 H18" stroke="#3442a8" stroke-width="1.6"/><path d="M6.5 7.5 C6.5 14.5 15.5 14.5 15.5 7.5" stroke="#3442a8" stroke-width="1.5" fill="none"/><path d="M1 23 L2.5 16 L8 14.5 M21 23 L19.5 16 L14 14.5 M1 23 H21" stroke="#3442a8" stroke-width="1.6" fill="none"/><path d="M10 15 L12 15 L12.8 21 L11 23 L9.2 21Z" fill="#3442a8"/><circle cx="11" cy="4" r="1" fill="#3442a8"/></svg><svg class="abs" style="left:1279px;top:342px" width="26" height="26" viewBox="0 0 26 26"><circle cx="11" cy="11" r="9.8" stroke="#3f9a7c" stroke-width="1.8" fill="none"/><circle cx="11" cy="11" r="4.5" stroke="#3f9a7c" stroke-width="2.4" fill="#c9f3e6"/></svg><span class="lb" style="left:976px;top:236.4px">街道</span><span class="num" style="left:976px;top:256.8px">0</span><span class="lb" style="left:1088.8px;top:236.4px">乡镇</span><span class="num" style="left:1088.8px;top:256.8px">0</span><span class="lb" style="left:1200.8px;top:236.4px">社区</span><span class="num" style="left:1200.8px;top:256.8px">0</span><span class="lb" style="left:1311.5px;top:228.8px">行政<br>村/居</span><span class="num" style="left:1311.5px;top:264px">0</span><span class="lb" style="left:976.8px;top:327.4px">派出所<br>民警</span><span class="num" style="left:976.8px;top:362px">0</span><span class="lb" style="left:1088.8px;top:327.4px">社区<br>民警</span><span class="num" style="left:1088.8px;top:362px">0</span><span class="lb" style="left:1200.8px;top:334.8px">辅警</span><span class="num" style="left:1200.8px;top:354.8px">0</span><span class="lb" style="left:1314px;top:327.4px">警务<br>责任区</span><span class="num" style="left:1314px;top:362px">0</span>
<div class="card2" style="left:1431px;top:204.5px"></div><span class="num" style="left:1443.3px;top:216.0px">0</span><span class="lb" style="left:1443px;top:235.8px">警情</span><div class="icbg2" style="left:1580.7px;top:217.3px"></div><div class="card2" style="left:1658.7px;top:204.5px"></div><span class="num" style="left:1671.0px;top:216.0px">0</span><span class="lb" style="left:1670.7px;top:235.8px">治安案件</span><div class="icbg2" style="left:1808.4px;top:217.3px"></div><div class="card2" style="left:1431px;top:283px"></div><span class="num" style="left:1443.3px;top:294.5px">0</span><span class="lb" style="left:1443px;top:314.3px">刑事立案</span><div class="icbg2" style="left:1580.7px;top:295.8px"></div><div class="card2" style="left:1658.7px;top:283px"></div><span class="num" style="left:1671.0px;top:294.5px">0</span><span class="lb" style="left:1670.7px;top:314.3px">行政受案</span><div class="icbg2" style="left:1808.4px;top:295.8px"></div><svg class="abs" style="left:1585.7px;top:222.3px" width="24" height="24" viewBox="0 0 24 24"><path d="M5.5 19 V12.5 A6.5 6.5 0 0 1 18.5 12.5 V19Z" stroke="#d42a2e" stroke-width="1.9" fill="none"/><rect x="3" y="20.2" width="18" height="2.4" rx="1" fill="#d42a2e"/><path d="M12 1.5 V4 M5 4.2 L6.6 6 M19 4.2 L17.4 6 M1.2 10 H3.6 M22.8 10 H20.4" stroke="#d42a2e" stroke-width="1.7" stroke-linecap="round"/></svg><svg class="abs" style="left:1811.9px;top:222.3px" width="24" height="24" viewBox="0 0 24 24"><path d="M12 1.5 L21 5 V12 C21 17.5 17 21 12 23 C7 21 3 17.5 3 12 V5Z" stroke="#4060b0" stroke-width="1.8" fill="none"/><path d="M8.5 14 A3.5 3.5 0 0 1 15.5 14Z" stroke="#4060b0" stroke-width="1.5" fill="none"/><path d="M9.5 16.5 H14.5 M10 18.5 H14" stroke="#4060b0" stroke-width="1.4"/><path d="M12 6.5 V8.5 M7.5 8.5 L8.8 9.8 M16.5 8.5 L15.2 9.8" stroke="#4060b0" stroke-width="1.4" stroke-linecap="round"/></svg><svg class="abs" style="left:1585.7px;top:300.8px" width="24" height="24" viewBox="0 0 24 24"><circle cx="7" cy="16.5" r="5" stroke="#e07028" stroke-width="2.2" fill="none"/><circle cx="16.8" cy="16.5" r="5" stroke="#e07028" stroke-width="2.2" fill="none"/><path d="M4.5 12 L7.5 7.5 L10 9.5 L8.8 12Z" fill="#e07028"/><path d="M14 11.5 L14.5 7 L18 7 L18.8 11.5Z" fill="#e07028"/><path d="M9 7.5 L11 3.5 L13.5 3.5 L15 7" stroke="#e8a070" stroke-width="1.3" fill="none"/></svg><svg class="abs" style="left:1811.9px;top:300.8px" width="24" height="24" viewBox="0 0 24 24"><rect x="4" y="2" width="16" height="20" rx="2" stroke="#e8a53a" stroke-width="1.8" fill="#fde9b8"/><path d="M12 5.5 L13.2 8 L15.8 8.3 L13.8 10 L14.4 12.6 L12 11.3 L9.6 12.6 L10.2 10 L8.2 8.3 L10.8 8Z" stroke="#e8a53a" stroke-width="1.1" fill="none"/><path d="M7.5 15.5 H16.5 M7.5 18.5 H16.5" stroke="#e8a53a" stroke-width="1.5"/></svg><span class="lb" style="left:1433.9px;top:362.4px">命案:</span><span class="num" style="left:1481px;top:363px">12</span><span class="lb" style="left:1553px;top:362.4px">两抢:</span><span class="num" style="left:1600.4px;top:363px">5</span><span class="lb" style="left:1672px;top:362.4px">盗窃:</span><span class="num" style="left:1719.6px;top:363px">26</span><span class="lb" style="left:1790px;top:362.4px">诈骗:</span><span class="num" style="left:1836px;top:363px">44</span>
<span class="lb r" style="left:909.6px;width:100px;top:511px">标准地址</span><span class="num" style="left:1021.4px;top:511px">0</span><span class="lb r" style="left:909.6px;width:100px;top:548px">实有房屋</span><span class="num" style="left:1021.4px;top:548px">0</span><span class="lb r" style="left:909.6px;width:100px;top:585px">出租房屋</span><span class="num" style="left:1021.4px;top:585px">0</span><span class="lb r" style="left:1065px;width:100px;top:511px">实有人口</span><span class="num" style="left:1178.4px;top:511px">0</span><span class="lb r" style="left:1065px;width:100px;top:548px">流出人口</span><span class="num" style="left:1178.4px;top:548px">0</span><span class="lb r" style="left:1065px;width:100px;top:585px">流入人口</span><span class="num" style="left:1178.4px;top:585px">0</span><span class="lb r" style="left:1065px;width:100px;top:622px">境外人员</span><span class="num" style="left:1178.4px;top:622px">0</span><span class="lb r" style="left:1065px;width:100px;top:659px">特定对象</span><span class="num" style="left:1178.4px;top:659px">0</span><span class="lb r" style="left:1222px;width:100px;top:511px">实有单位</span><span class="num" style="left:1335.4px;top:511px">0</span><span class="lb r" style="left:1222px;width:100px;top:548px">从业人员</span><span class="num" style="left:1335.4px;top:548px">0</span><span class="lb r" style="left:1222px;width:100px;top:585px">金融</span><span class="num" style="left:1335.4px;top:585px">0</span><span class="lb r" style="left:1222px;width:100px;top:622px">医院</span><span class="num" style="left:1335.4px;top:622px">0</span><span class="lb r" style="left:1222px;width:100px;top:659px">学校</span><span class="num" style="left:1335.4px;top:659px">0</span>
<span class="lb" style="left:1441.5px;top:481.3px">矛盾纠纷提级督办：省</span><span class="num" style="left:1604.4px;top:481.3px;color:#c8161d">11</span><span class="lb" style="left:1649.8px;top:481.3px">市</span><span class="num" style="left:1666.7px;top:481.3px;color:#e8962a">12</span><span class="lb" style="left:1712.6px;top:481.3px">县</span><span class="num" style="left:1731.9px;top:481.3px;color:#d8b040">13</span><svg class="abs" style="left:1439px;top:507px" width="100" height="100" viewBox="0 0 100 100">
<defs><linearGradient id="dg" x1="0.35" y1="0" x2="0.65" y2="1"><stop offset="0" stop-color="#1d52e6"/><stop offset=".45" stop-color="#1a86ea"/><stop offset="1" stop-color="#18d2f2"/></linearGradient>
<filter id="ds" x="-20%" y="-20%" width="140%" height="140%"><feDropShadow dx="0" dy="1" stdDeviation="1.5" flood-color="#9fb3d0" flood-opacity=".6"/></filter></defs>
<circle cx="50" cy="50" r="37" fill="#fff" filter="url(#ds)"/>
<circle cx="50" cy="50" r="37" stroke="#c9c9cc" stroke-width="10" fill="none"/>
<circle cx="50" cy="50" r="37" stroke="url(#dg)" stroke-width="10" fill="none" stroke-linecap="round" stroke-dasharray="176 500" transform="rotate(-1 50 50)"/>
</svg><span class="t14" style="left:1468px;top:538.5px">化解率</span><span class="num18" style="left:1471px;top:560.3px">83%</span><span class="lb" style="left:1567.4px;top:520.5px">排查纠纷</span><div class="abs" style="left:1641.5px;top:525.5px;width:163px;height:6px;border-radius:3px;background:#e6e6e8"></div><div class="abs" style="left:1641.5px;top:525.5px;width:107.5px;height:6px;border-radius:3px;background:linear-gradient(90deg,#1aa262,#34d07e)"></div><span class="num18" style="left:1816.3px;top:515.6px">1525</span><span class="lb" style="left:1567.4px;top:548.7px">化解纠纷</span><div class="abs" style="left:1641.5px;top:553.7px;width:163px;height:6px;border-radius:3px;background:#e6e6e8"></div><div class="abs" style="left:1641.5px;top:553.7px;width:83.79999999999995px;height:6px;border-radius:3px;background:linear-gradient(90deg,#d2892a,#f2a93e)"></div><span class="num18" style="left:1816.3px;top:543.7px">1324</span><span class="lb" style="left:1567.4px;top:576.8px">推送纠纷</span><div class="abs" style="left:1641.5px;top:581.8px;width:163px;height:6px;border-radius:3px;background:#e6e6e8"></div><div class="abs" style="left:1641.5px;top:581.8px;width:100.5px;height:6px;border-radius:3px;background:linear-gradient(90deg,#6f52c4,#b563ea)"></div><span class="num18" style="left:1816.3px;top:571.8px">1442</span><div class="abs" style="left:1429.6px;top:621px;width:202px;height:35.5px;background:#fcd6bd;border-radius:3px;box-shadow:0 1px 3px rgba(230,170,140,.35)"></div><span class="lb" style="left:1442.1px;top:630.5px">调解对象涉重复警情</span><span class="num" style="left:1609.8px;top:630.5px">0</span><div class="abs" style="left:1651.9px;top:621px;width:202px;height:35.5px;background:#fcd6bd;border-radius:3px;box-shadow:0 1px 3px rgba(230,170,140,.35)"></div><span class="lb" style="left:1664.4px;top:630.5px">调解对象涉特定对象</span><span class="num" style="left:1832px;top:630.5px">0</span><div class="abs" style="left:1429.6px;top:665.4px;width:202px;height:35.5px;background:#fcd6bd;border-radius:3px;box-shadow:0 1px 3px rgba(230,170,140,.35)"></div><span class="lb" style="left:1442.1px;top:674.9px">调解双方缺联系人方式</span><span class="num" style="left:1609.8px;top:674.9px">0</span><div class="abs" style="left:1651.9px;top:665.4px;width:202px;height:35.5px;background:#fcd6bd;border-radius:3px;box-shadow:0 1px 3px rgba(230,170,140,.35)"></div><span class="lb" style="left:1664.4px;top:674.9px">八单一表未及时推送</span><span class="num" style="left:1832px;top:674.9px">0</span>
<svg class="abs" style="left:922.5px;top:808.9px" width="16" height="14" viewBox="0 0 16 14"><path d="M1.5 1.5 H14.5 V10 H7 L4 12.5 V10 H1.5Z" stroke="#4a86a8" stroke-width="1.2" fill="none" stroke-linejoin="round"/><path d="M4.5 5 H11.5 M4.5 7.5 H9" stroke="#4a86a8" stroke-width="1.1"/></svg><span class="msg " style="left:948px;top:804.9px"><span class="dte">[2024-03-28]</span>&nbsp;&nbsp;<span class="zh">对每日涉矛盾纠纷人员交由管展风险评估</span></span><svg class="abs" style="left:922.5px;top:848.8px" width="16" height="14" viewBox="0 0 16 14"><path d="M1.5 1.5 H14.5 V10 H7 L4 12.5 V10 H1.5Z" stroke="#4a86a8" stroke-width="1.2" fill="none" stroke-linejoin="round"/><path d="M4.5 5 H11.5 M4.5 7.5 H9" stroke="#4a86a8" stroke-width="1.1"/></svg><span class="msg " style="left:948px;top:844.8px"><span class="dte">[2024-03-28]</span>&nbsp;&nbsp;<span class="zh">对每日涉矛盾纠纷人员交由管线单险评......</span></span><svg class="abs" style="left:922.5px;top:888.6999999999999px" width="16" height="14" viewBox="0 0 16 14"><path d="M1.5 1.5 H14.5 V10 H7 L4 12.5 V10 H1.5Z" stroke="#4a86a8" stroke-width="1.2" fill="none" stroke-linejoin="round"/><path d="M4.5 5 H11.5 M4.5 7.5 H9" stroke="#4a86a8" stroke-width="1.1"/></svg><span class="msg link" style="left:948px;top:884.6999999999999px"><span class="dte">[2024-03-28]</span>&nbsp;&nbsp;<span class="zh">对每日涉矛盾纠纷人员交由管线单位开展</span></span><svg class="abs" style="left:922.5px;top:928.5999999999999px" width="16" height="14" viewBox="0 0 16 14"><path d="M1.5 1.5 H14.5 V10 H7 L4 12.5 V10 H1.5Z" stroke="#bbb" stroke-width="1.2" fill="none" stroke-linejoin="round"/><path d="M4.5 5 H11.5 M4.5 7.5 H9" stroke="#bbb" stroke-width="1.1"/></svg><span class="msg gray" style="left:948px;top:924.5999999999999px"><span class="dte">[2024-03-28]</span>&nbsp;&nbsp;<span class="zh">对每日涉矛盾纠纷人员交由管险评</span></span><svg class="abs" style="left:922.5px;top:968.5px" width="16" height="14" viewBox="0 0 16 14"><path d="M1.5 1.5 H14.5 V10 H7 L4 12.5 V10 H1.5Z" stroke="#4a86a8" stroke-width="1.2" fill="none" stroke-linejoin="round"/><path d="M4.5 5 H11.5 M4.5 7.5 H9" stroke="#4a86a8" stroke-width="1.1"/></svg><span class="msg " style="left:948px;top:964.5px"><span class="dte">[2024-03-28]</span>&nbsp;&nbsp;<span class="zh">对每日涉矛盾纠纷人员交由管线单位开展风</span></span><svg class="abs" style="left:922.5px;top:1008.4px" width="16" height="14" viewBox="0 0 16 14"><path d="M1.5 1.5 H14.5 V10 H7 L4 12.5 V10 H1.5Z" stroke="#4a86a8" stroke-width="1.2" fill="none" stroke-linejoin="round"/><path d="M4.5 5 H11.5 M4.5 7.5 H9" stroke="#4a86a8" stroke-width="1.1"/></svg><span class="msg " style="left:948px;top:1004.4px"><span class="dte">[2024-03-28]</span>&nbsp;&nbsp;<span class="zh">对每日涉矛盾纠纷人员交由管线单位开展风</span></span>
<svg class="abs" style="left:1421.5px;top:807.9px" width="15" height="16" viewBox="0 0 15 16"><path d="M7.5 1.5 C4 1.5 3 4.5 3 7 V11 L1.2 13 H13.8 L12 11 V7 C12 4.5 11 1.5 7.5 1.5Z" stroke="#3a78a8" stroke-width="1.3" fill="none" stroke-linejoin="round"/><path d="M6 14.5 H9" stroke="#3a78a8" stroke-width="1.2"/></svg><span class="msg " style="left:1446px;top:804.9px"><span class="dte">[2024-03-28]</span>&nbsp;&nbsp;<span class="zh">对每日涉矛盾纠纷人员交由管线单险评估</span></span><svg class="abs" style="left:1421.5px;top:847.8px" width="15" height="16" viewBox="0 0 15 16"><path d="M7.5 1.5 C4 1.5 3 4.5 3 7 V11 L1.2 13 H13.8 L12 11 V7 C12 4.5 11 1.5 7.5 1.5Z" stroke="#3a78a8" stroke-width="1.3" fill="none" stroke-linejoin="round"/><path d="M6 14.5 H9" stroke="#3a78a8" stroke-width="1.2"/></svg><span class="msg " style="left:1446px;top:844.8px"><span class="dte">[2024-03-28]</span>&nbsp;&nbsp;<span class="zh">对每日涉矛盾纠纷人员交由管线单险评......</span></span><svg class="abs" style="left:1421.5px;top:887.6999999999999px" width="15" height="16" viewBox="0 0 15 16"><path d="M7.5 1.5 C4 1.5 3 4.5 3 7 V11 L1.2 13 H13.8 L12 11 V7 C12 4.5 11 1.5 7.5 1.5Z" stroke="#bbb" stroke-width="1.3" fill="none" stroke-linejoin="round"/><path d="M6 14.5 H9" stroke="#bbb" stroke-width="1.2"/></svg><span class="msg gray" style="left:1446px;top:884.6999999999999px"><span class="dte">[2024-03-28]</span>&nbsp;&nbsp;<span class="zh">对每日涉矛盾纠纷人员交由管线单险评估</span></span><svg class="abs" style="left:1421.5px;top:927.5999999999999px" width="15" height="16" viewBox="0 0 15 16"><path d="M7.5 1.5 C4 1.5 3 4.5 3 7 V11 L1.2 13 H13.8 L12 11 V7 C12 4.5 11 1.5 7.5 1.5Z" stroke="#3a78a8" stroke-width="1.3" fill="none" stroke-linejoin="round"/><path d="M6 14.5 H9" stroke="#3a78a8" stroke-width="1.2"/></svg><span class="msg " style="left:1446px;top:924.5999999999999px"><span class="dte">[2024-03-28]</span>&nbsp;&nbsp;<span class="zh">对每日涉矛盾纠纷人员交由管线单险评......</span></span></div>
<!--/PANELS-->
</body></html>
